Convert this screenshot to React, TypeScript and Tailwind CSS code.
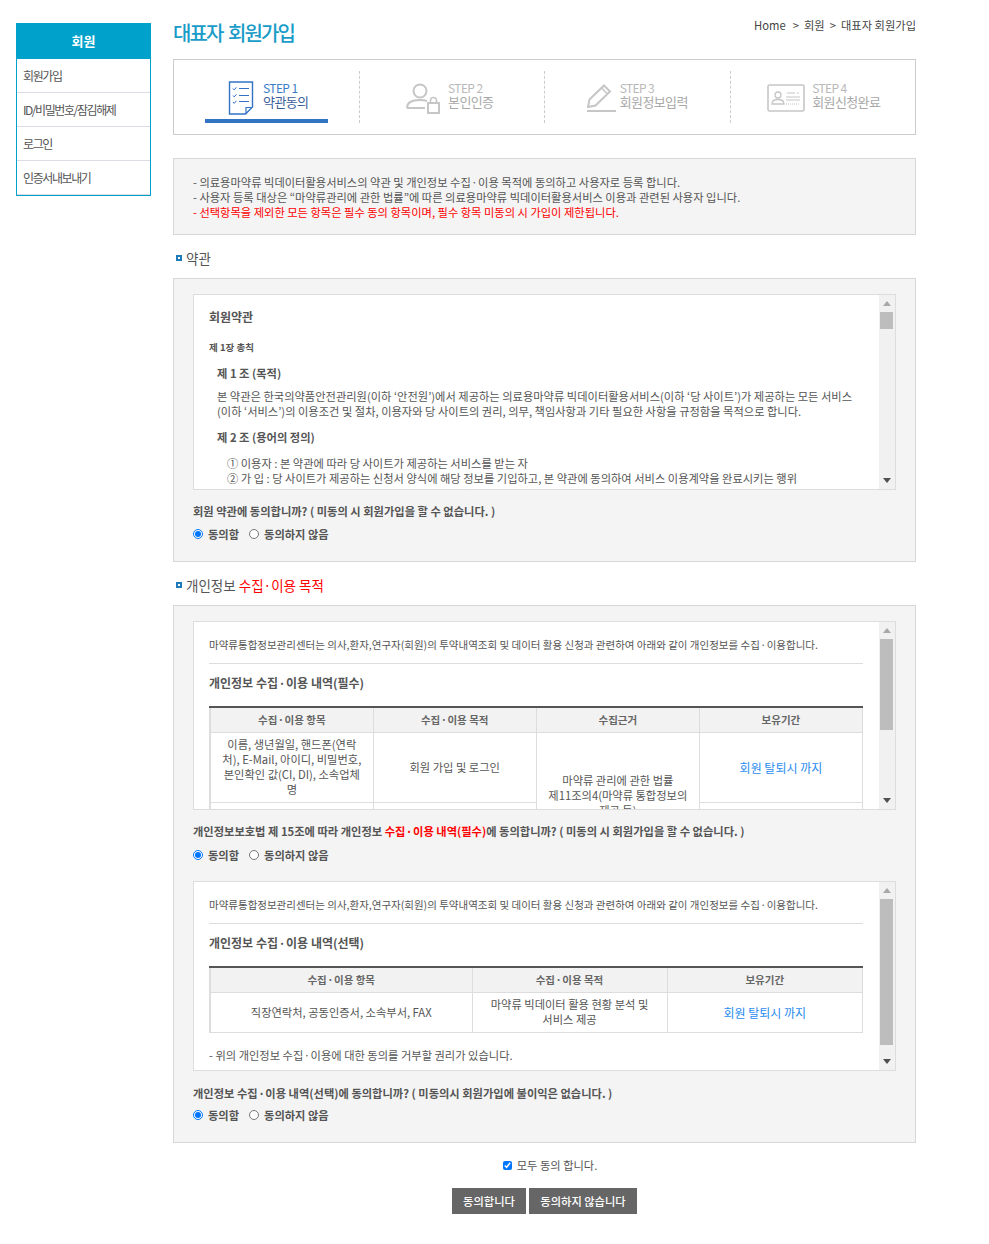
import type { ReactNode } from "react"

const font = { fontFamily: '"Noto Sans CJK KR", "Noto Sans", sans-serif' }

function DocIcon() {
  return (
    <svg width="26" height="34" viewBox="0 0 26 34" fill="none" stroke="#3373c4">
      <path d="M1.5 1 H24.5 V26 L17.5 33 H1.5 Z" strokeWidth="1.4" />
      <path d="M24 26.5 H18 V33" strokeWidth="1.2" />
      <path d="M5 7.5 l1.2 1.4 2.2-2.6 M5 14.5 l1.2 1.4 2.2-2.6 M5 21 l1.2 1.4 2.2-2.6" strokeWidth="1" />
      <path d="M11 7.5 H21 M11 14.5 H21 M11 20.5 H21" strokeWidth="1.2" />
    </svg>
  )
}

function LockUserIcon() {
  return (
    <svg width="34" height="32" viewBox="0 0 34 32" fill="none" stroke="#c6c6c6" strokeWidth="2">
      <circle cx="14" cy="9" r="6.5" />
      <path d="M1 26 C1 20 6 18 14 18 C17 18 19 18.3 21 19 M1 26 H19" />
      <rect x="22" y="21" width="11" height="10" />
      <path d="M24.5 21 V18.5 a3 3 0 0 1 6 0 V21" strokeWidth="1.6" />
    </svg>
  )
}

function PencilIcon() {
  return (
    <svg width="30" height="28" viewBox="0 0 30 28" fill="none" stroke="#c6c6c6">
      <path d="M1 23 L2.5 15.5 L17 1.5 L23 7.5 L8.5 21.5 Z" strokeWidth="2" />
      <path d="M14.5 4 L20.5 10" strokeWidth="1.6" />
      <path d="M0 27 H29" strokeWidth="2" />
    </svg>
  )
}

function CardIcon() {
  return (
    <svg width="38" height="28" viewBox="0 0 38 28" fill="none" stroke="#c6c6c6">
      <rect x="1" y="1" width="36" height="26" rx="1.5" strokeWidth="1.6" />
      <circle cx="11" cy="11" r="3" strokeWidth="1.3" />
      <path d="M5 20 C5 16 8 15.5 11 15.5 C14 15.5 17 16 17 20 Z" strokeWidth="1.3" />
      <path d="M20 9 H28 M30 9 H32 M19 13 H33 M19 16 H33" strokeWidth="1.2" />
      <path d="M19 20 H33" strokeWidth="1.2" strokeDasharray="1 1" />
    </svg>
  )
}

function Step({ icon, step, name, active, last, gap }: { icon: ReactNode; step: string; name: string; active?: boolean; last?: boolean; gap: string }) {
  return (
    <div className={`flex h-[52px] flex-1 flex-col items-center ${last ? "" : "border-r border-dashed border-[#cccccc]"}`}>
      <div className={`mt-[10px] flex h-[34px] items-center ${gap}`}>
        {icon}
        <div className={`mb-[6px] flex flex-col text-[13px] leading-[14px] tracking-[-0.6px] ${active ? "text-[#3a5f9a]" : "text-[#a9a9a9]"}`}>
          <span className={`text-[12px] ${active ? "text-[#3a7cc8]" : "text-[#b9b9b9]"}`}>{step}</span>
          <span>{name}</span>
        </div>
      </div>
      {active && <div className="mt-auto h-1 w-[123px] bg-[#3373c4]" />}
    </div>
  )
}

function Dot() {
  return <span className="mx-[0.5px]">·</span>
}

function SectionTitle({ children }: { children: ReactNode }) {
  return (
    <div className="flex h-[20px] items-center gap-1 pl-[3px] text-[13.5px] text-[#555555]">
      <span className="h-[6px] w-[6px] border-[2px] border-[#1f7ab8] bg-white" />
      <span>{children}</span>
    </div>
  )
}

// fake scrollbar, the thumb offset and height come from the picture
function ScrollBar({ thumb }: { thumb: string }) {
  return (
    <div className="flex w-4 shrink-0 flex-col bg-[#f1f1f1]">
      <div className="flex h-[17px] shrink-0 items-center justify-center pr-[1px]">
        <svg width="8" height="5" viewBox="0 0 8 5"><path d="M4 0 L8 5 H0 Z" fill="#a8a8a8" /></svg>
      </div>
      <div className={`ml-[1px] mr-[2px] shrink-0 bg-[#bdbdbd] ${thumb}`} />
      <div className="mt-auto flex h-[17px] shrink-0 items-center justify-center pr-[1px]">
        <svg width="8" height="5" viewBox="0 0 8 5"><path d="M4 5 L8 0 H0 Z" fill="#505050" /></svg>
      </div>
    </div>
  )
}

function ScrollBox({ height, thumb, children }: { height: string; thumb: string; children: ReactNode }) {
  return (
    <div className={`flex border border-[#dddddd] bg-white ${height}`}>
      <div className="min-w-0 flex-1 overflow-hidden pl-[15px] pr-[16px]">{children}</div>
      <ScrollBar thumb={thumb} />
    </div>
  )
}

function Agree() {
  return (
    <div className="flex h-[16px] items-center text-[11.25px] font-bold text-[#555555]">
      <input type="radio" checked readOnly className="m-0 mr-[5px] h-[10px] w-[10px]" />
      <span className="mr-[10px]">동의함</span>
      <input type="radio" checked={false} readOnly className="m-0 mr-[5px] h-[10px] w-[10px]" />
      <span>동의하지 않음</span>
    </div>
  )
}

const th = "border-r border-b border-[#dddddd] bg-[#f2f2f2] text-center text-[10.5px] font-bold text-[#666666]"
const td = "border-r border-b border-[#dddddd] px-2 text-center align-middle text-[11.25px] leading-[15px] text-[#555555]"
const tdLink = "border-r border-b border-[#dddddd] px-2 text-center align-middle text-[12px] leading-[15px] text-[#2a8cf0]"

function Intro() {
  return (
    <div className="flex h-[42px] items-center border-b border-[#dddddd] pt-[5px] text-[10.5px] text-[#555555]">
      <span>마약류통합정보관리센터는 의사,환자,연구자(회원)의 투약내역조회 및 데이터 활용 신청과 관련하여 아래와 같이 개인정보를 수집<Dot />이용합니다.</span>
    </div>
  )
}

function Nav() {
  const items = ["회원가입", "ID/비밀번호/잠김해제", "로그인", "인증서내보내기"]
  return (
    <aside className="w-[135px] shrink-0 self-start border border-[#00a2cc]">
      <div className="flex h-[35px] items-center justify-center bg-[#00a2cc] pb-[2px] text-[13px] font-bold text-white">회원</div>
      {items.map((item) => (
        <div key={item} className="flex h-[34px] items-center border-b border-[#dcdce4] pl-[6px] text-[12px] tracking-[-1.4px] text-[#555555]">
          {item}
        </div>
      ))}
    </aside>
  )
}

export default function App() {
  return (
    <div className="flex h-[1244px] w-[989px] overflow-hidden bg-white pl-4 pt-[23px]" style={font}>
      <Nav />
      <main className="ml-[22px] w-[743px]">
        <div className="flex h-[36px] items-start justify-between">
          <h1 className="text-[20px] leading-[19px] font-medium tracking-[-1.9px] [word-spacing:3px] text-[#1a9cc8]">대표자 회원가입</h1>
          <div className="text-[11.25px] leading-[5px] text-[#444444]">
            <span className="mr-[2px]">Home</span>&nbsp; &gt;&nbsp; 회원&nbsp; &gt;&nbsp; 대표자 회원가입
          </div>
        </div>

        <div className="flex h-[76px] items-start border border-[#cccccc] pt-[11px]">
          <Step active icon={<div className="ml-1"><DocIcon /></div>} step="STEP 1" name="약관동의" gap="gap-[9px]" />
          <Step icon={<LockUserIcon />} step="STEP 2" name="본인인증" gap="mr-[4px] gap-[8px]" />
          <Step icon={<PencilIcon />} step="STEP 3" name="회원정보입력" gap="gap-[3px]" />
          <Step last icon={<CardIcon />} step="STEP 4" name="회원신청완료" gap="ml-[2px] gap-[7px]" />
        </div>

        <div className="mt-[23px] h-[77px] border border-[#d7d7d7] bg-[#f4f4f4] pl-[19px] pt-[16px] text-[11.25px] leading-[15px] text-[#555555]">
          <p>- 의료용마약류 빅데이터활용서비스의 약관 및 개인정보 수집<Dot />이용 목적에 동의하고 사용자로 등록 합니다.</p>
          <p>- 사용자 등록 대상은 “마약류관리에 관한 법률”에 따른 의료용마약류 빅데이터활용서비스 이용과 관련된 사용자 입니다.</p>
          <p className="text-[#ff0000]">- 선택항목을 제외한 모든 항목은 필수 동의 항목이며, 필수 항목 미동의 시 가입이 제한됩니다.</p>
        </div>

        <div className="mt-[13px]"><SectionTitle>약관</SectionTitle></div>

        <section className="mt-[10px] h-[284px] border border-[#d7d7d7] bg-[#f4f4f4] px-[19px] pt-[15px]">
          <ScrollBox height="h-[196px]" thumb="h-[17px]">
            <h3 className="mt-[13px] text-[12px] leading-[18px] font-bold text-[#555555]">회원약관</h3>
            <h4 className="mt-[14px] text-[9.5px] leading-[14px] font-bold text-[#555555]">제 1장 총칙</h4>
            <div className="pl-2 text-[11.25px] leading-[15px] text-[#555555]">
              <h5 className="mt-[11px] leading-[16px] font-bold">제 1 조 (목적)</h5>
              <p className="mt-[8px]">본 약관은 한국의약품안전관리원(이하 ‘안전원’)에서 제공하는 의료용마약류 빅데이터활용서비스(이하 ‘당 사이트’)가 제공하는 모든 서비스<br />(이하 ‘서비스’)의 이용조건 및 절차, 이용자와 당 사이트의 권리, 의무, 책임사항과 기타 필요한 사항을 규정함을 목적으로 합니다.</p>
              <h5 className="mt-[10px] leading-[16px] font-bold">제 2 조 (용어의 정의)</h5>
              <div className="mt-[11px] pl-[10px]">
                <p>① 이용자 : 본 약관에 따라 당 사이트가 제공하는 서비스를 받는 자</p>
                <p>② 가 입 : 당 사이트가 제공하는 신청서 양식에 해당 정보를 기입하고, 본 약관에 동의하여 서비스 이용계약을 완료시키는 행위</p>
                <p className="mt-[1px]">③ 회 원 : 당 사이트에 회원가입을 한 자로서 이용계약을 체결한 자</p>
              </div>
            </div>
          </ScrollBox>
          <p className="mt-[13px] h-[16px] text-[11.25px] leading-[16px] font-bold text-[#555555]">회원 약관에 동의합니까? ( 미동의 시 회원가입을 할 수 없습니다. )</p>
          <div className="mt-[7px]"><Agree /></div>
        </section>

        <div className="mt-[13px]">
          <SectionTitle>개인정보 <span className="text-[#ff0000]">수집·이용 목적</span></SectionTitle>
        </div>

        <section className="mt-[10px] h-[538px] border border-[#d7d7d7] bg-[#f4f4f4] px-[19px] pt-[15px]">
          <ScrollBox height="h-[189px]" thumb="h-[91px]">
            <Intro />
            <h3 className="mt-[10px] text-[12px] leading-[18px] font-bold text-[#555555]">개인정보 수집<Dot />이용 내역(필수)</h3>
            <table className="mt-[14px] w-full table-fixed border-t-2 border-l-2 border-t-[#555555] border-l-[#dddddd]">
              <thead>
                <tr className="h-[25px]">
                  <th className={th}>수집<Dot />이용 항목</th>
                  <th className={th}>수집<Dot />이용 목적</th>
                  <th className={th}>수집근거</th>
                  <th className={th}>보유기간</th>
                </tr>
              </thead>
              <tbody>
                <tr className="h-[70px]">
                  <td className={td}>이름, 생년월일, 핸드폰(연락<br />처), E-Mail, 아이디, 비밀번호,<br />본인확인 값(CI, DI), 소속업체<br />명</td>
                  <td className={td}>회원 가입 및 로그인</td>
                  <td rowSpan={2} className={td}>마약류 관리에 관한 법률<br />제11조의4(마약류 통합정보의<br />제공 등)</td>
                  <td className={tdLink}>회원 탈퇴시 까지</td>
                </tr>
                <tr className="h-[56px]">
                  <td className={td} />
                  <td className={td} />
                  <td className={td} />
                </tr>
              </tbody>
            </table>
          </ScrollBox>
          <p className="mt-[13px] h-[16px] text-[11.25px] leading-[16px] font-bold text-[#555555]">
            개인정보보호법 제 15조에 따라 개인정보 <span className="text-[#ff0000]">수집<Dot />이용 내역(필수)</span>에 동의합니까? ( 미동의 시 회원가입을 할 수 없습니다. )
          </p>
          <div className="mt-[8px]"><Agree /></div>

          <div className="mt-[18px]">
            <ScrollBox height="h-[190px]" thumb="h-[146px]">
              <Intro />
              <h3 className="mt-[10px] text-[12px] leading-[18px] font-bold text-[#555555]">개인정보 수집<Dot />이용 내역(선택)</h3>
              <table className="mt-[14px] w-full table-fixed border-t-2 border-l-2 border-t-[#555555] border-l-[#dddddd]">
                <colgroup>
                  <col className="w-[262px]" />
                  <col className="w-[195px]" />
                  <col />
                </colgroup>
                <thead>
                  <tr className="h-[25px]">
                    <th className={th}>수집<Dot />이용 항목</th>
                    <th className={th}>수집<Dot />이용 목적</th>
                    <th className={th}>보유기간</th>
                  </tr>
                </thead>
                <tbody>
                  <tr className="h-[40px]">
                    <td className={td}>직장연락처, 공동인증서, 소속부서, FAX</td>
                    <td className={td}>마약류 빅데이터 활용 현황 분석 및<br />서비스 제공</td>
                    <td className={tdLink}>회원 탈퇴시 까지</td>
                  </tr>
                </tbody>
              </table>
              <p className="mt-[15px] text-[11.25px] leading-[15px] text-[#555555]">- 위의 개인정보 수집<Dot />이용에 대한 동의를 거부할 권리가 있습니다.</p>
            </ScrollBox>
          </div>
          <p className="mt-[14px] h-[16px] text-[11.25px] leading-[16px] font-bold text-[#555555]">개인정보 수집<Dot />이용 내역(선택)에 동의합니까? ( 미동의시 회원가입에 불이익은 없습니다. )</p>
          <div className="mt-[6px]"><Agree /></div>
        </section>

        <div className="mt-[15px] ml-[11px] flex h-[14px] items-center justify-center text-[11.25px] text-[#555555]">
          <input type="checkbox" checked readOnly className="m-0 mr-[5px] h-[9px] w-[9px]" />
          모두 동의 합니다.
        </div>

        <div className="mt-[16px] flex justify-center gap-[3px]">
          <button className="h-[26px] w-[74px] bg-[#666666] text-[11.25px] font-medium text-white">동의합니다</button>
          <button className="h-[26px] w-[108px] bg-[#666666] text-[11.25px] font-medium text-white">동의하지 않습니다</button>
        </div>
      </main>
    </div>
  )
}
